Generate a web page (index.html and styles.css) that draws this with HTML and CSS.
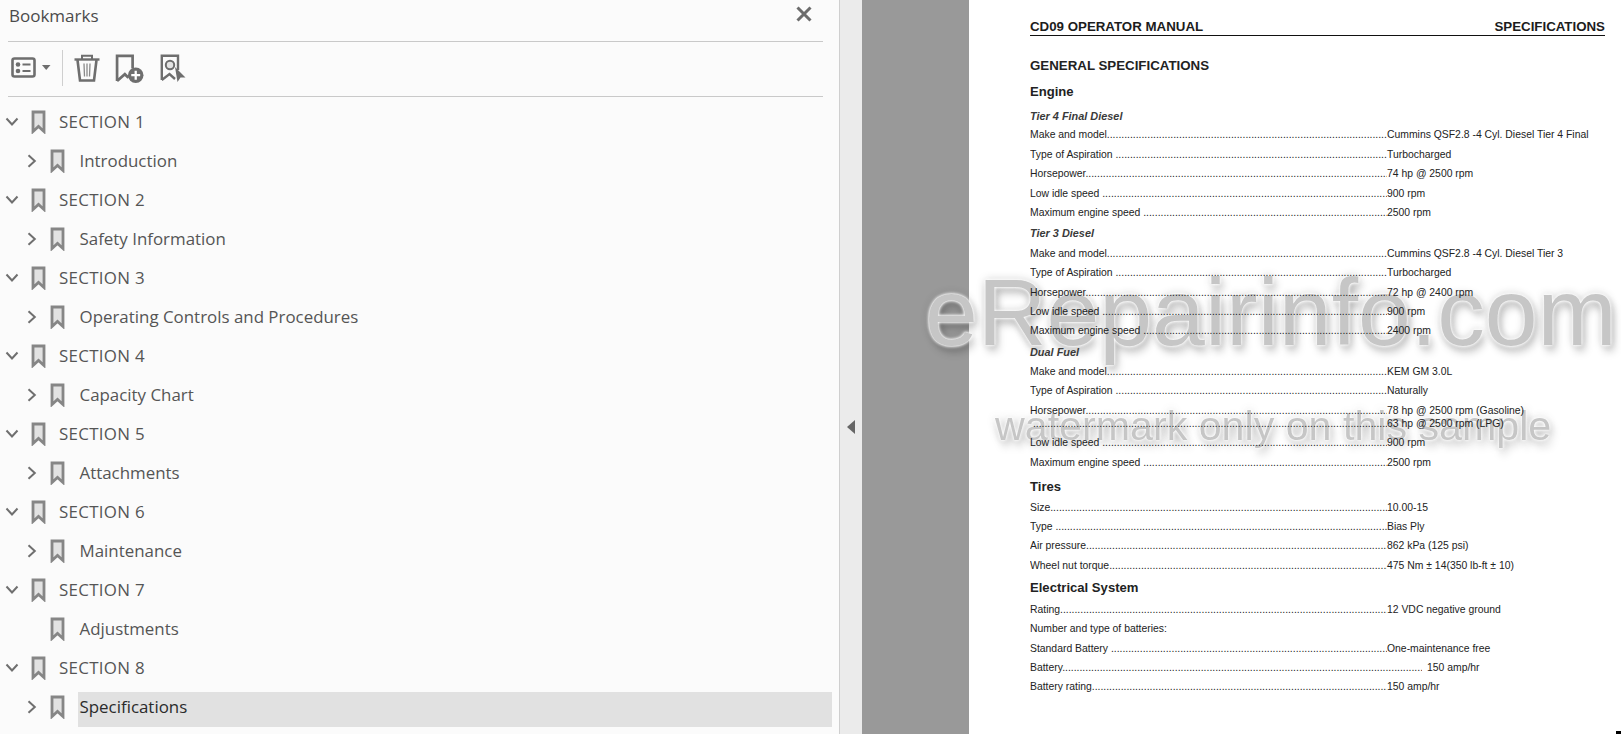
FILE: index.html
```html
<!DOCTYPE html>
<html lang="en">
<head>
<meta charset="utf-8">
<title>Bookmarks</title>
<link rel="stylesheet" href="styles.css">
</head>
<body>
<svg class="sprite" aria-hidden="true">
  <defs>
    <symbol id="bm" viewBox="0 0 15 24"><path d="M2 2 H13 V21.5 L7.5 16.5 L2 21.5 Z" fill="#e2e2e2" stroke="#868686" stroke-width="2.8" stroke-linejoin="miter"/></symbol>
    <symbol id="down" viewBox="0 0 14 10"><path d="M1.5 1.5 L7 7.5 L12.5 1.5" fill="none" stroke="#6f6f6f" stroke-width="2"/></symbol>
    <symbol id="right" viewBox="0 0 10 14"><path d="M1.5 1.2 L7.8 7 L1.5 12.8" fill="none" stroke="#6f6f6f" stroke-width="2"/></symbol>
  </defs>
</svg>
<aside class="sidebar">
  <header class="title-bar">
    <span class="title">Bookmarks</span>
    <svg class="close" viewBox="0 0 16 16"><path d="M1.5 1.5 L14.5 14.5 M14.5 1.5 L1.5 14.5" stroke="#6c6c6c" stroke-width="3" fill="none"/></svg>
  </header>
  <div class="toolbar">
    <svg class="tool-list" viewBox="0 0 40 21">
      <rect x="1.5" y="1.5" width="22" height="18" rx="2" fill="none" stroke="#6e6e6e" stroke-width="2.6"/>
      <circle cx="7" cy="7.5" r="2.3" fill="#6e6e6e"/><circle cx="7" cy="14" r="2.3" fill="#6e6e6e"/>
      <path d="M11.5 7.5 H19.5 M11.5 14 H19.5" stroke="#6e6e6e" stroke-width="2.2"/>
      <path d="M31 8 H39.5 L35.2 13 Z" fill="#6e6e6e"/>
    </svg>
    <span class="tool-sep"></span>
    <svg class="tool-trash" viewBox="0 0 26 28">
      <path d="M0.5 5.5 H25.5" stroke="#6e6e6e" stroke-width="2.4"/>
      <path d="M8 5 V1.8 H18 V5" fill="none" stroke="#6e6e6e" stroke-width="2"/>
      <path d="M3.5 6 L6 26.5 H20 L22.5 6" fill="none" stroke="#6e6e6e" stroke-width="2.6"/>
      <path d="M10 9.5 L10.5 22.5 M13 9.5 V22.5 M16 9.5 L15.5 22.5" stroke="#8a8a8a" stroke-width="1.3"/>
    </svg>
    <svg class="tool-add" viewBox="0 0 28 28">
      <path d="M2 26 V1.8 H17 V14 M2 26 L9.5 19.5 L13 23" fill="none" stroke="#6e6e6e" stroke-width="2.6"/>
      <circle cx="20" cy="20.5" r="7.5" fill="#6e6e6e"/>
      <path d="M20 16.2 V24.8 M15.7 20.5 H24.3" stroke="#fff" stroke-width="2.2"/>
    </svg>
    <svg class="tool-pick" viewBox="0 0 26 28">
      <path d="M1.8 26 V1.8 H18 V16 M1.8 26 L9.5 20 L15 25" fill="none" stroke="#6e6e6e" stroke-width="2.4"/>
      <circle cx="10" cy="11" r="4.2" fill="#e4e4e4" stroke="#6e6e6e" stroke-width="2"/>
      <path d="M15 13 L25.5 23.5 H20.5 L17.5 28 Z" fill="#6e6e6e"/>
    </svg>
  </div>
  <nav class="tree">
    <div class="node"><svg class="chev-d"><use href="#down"/></svg><svg class="bm"><use href="#bm"/></svg><span class="label">SECTION 1</span></div>
    <div class="node sub"><svg class="chev-r"><use href="#right"/></svg><svg class="bm"><use href="#bm"/></svg><span class="label">Introduction</span></div>
    <div class="node"><svg class="chev-d"><use href="#down"/></svg><svg class="bm"><use href="#bm"/></svg><span class="label">SECTION 2</span></div>
    <div class="node sub"><svg class="chev-r"><use href="#right"/></svg><svg class="bm"><use href="#bm"/></svg><span class="label">Safety Information</span></div>
    <div class="node"><svg class="chev-d"><use href="#down"/></svg><svg class="bm"><use href="#bm"/></svg><span class="label">SECTION 3</span></div>
    <div class="node sub"><svg class="chev-r"><use href="#right"/></svg><svg class="bm"><use href="#bm"/></svg><span class="label">Operating Controls and Procedures</span></div>
    <div class="node"><svg class="chev-d"><use href="#down"/></svg><svg class="bm"><use href="#bm"/></svg><span class="label">SECTION 4</span></div>
    <div class="node sub"><svg class="chev-r"><use href="#right"/></svg><svg class="bm"><use href="#bm"/></svg><span class="label">Capacity Chart</span></div>
    <div class="node"><svg class="chev-d"><use href="#down"/></svg><svg class="bm"><use href="#bm"/></svg><span class="label">SECTION 5</span></div>
    <div class="node sub"><svg class="chev-r"><use href="#right"/></svg><svg class="bm"><use href="#bm"/></svg><span class="label">Attachments</span></div>
    <div class="node"><svg class="chev-d"><use href="#down"/></svg><svg class="bm"><use href="#bm"/></svg><span class="label">SECTION 6</span></div>
    <div class="node sub"><svg class="chev-r"><use href="#right"/></svg><svg class="bm"><use href="#bm"/></svg><span class="label">Maintenance</span></div>
    <div class="node"><svg class="chev-d"><use href="#down"/></svg><svg class="bm"><use href="#bm"/></svg><span class="label">SECTION 7</span></div>
    <div class="node sub leaf"><svg class="bm"><use href="#bm"/></svg><span class="label">Adjustments</span></div>
    <div class="node"><svg class="chev-d"><use href="#down"/></svg><svg class="bm"><use href="#bm"/></svg><span class="label">SECTION 8</span></div>
    <div class="node sub active"><svg class="chev-r"><use href="#right"/></svg><svg class="bm"><use href="#bm"/></svg><span class="label">Specifications</span></div>
    <div class="node"><svg class="chev-d"><use href="#down"/></svg><svg class="bm"><use href="#bm"/></svg><span class="label">SECTION 9</span></div>
  </nav>
</aside>
<main class="viewer">
  <div class="gutter"><svg class="collapse" viewBox="0 0 8 14"><path d="M8 0 V14 L0 7 Z" fill="#666"/></svg></div>
  <div class="backdrop"></div>
  <section class="page">
    <div class="page-head"><span>CD09 OPERATOR MANUAL</span><span>SPECIFICATIONS</span></div>
    <h1 class="h-main">GENERAL SPECIFICATIONS</h1>
    <h2 class="h-engine">Engine</h2>
    <h3 class="tier">Tier 4 Final Diesel</h3>
    <div class="row"><span class="lead">Make and model</span><span>Cummins QSF2.8 -4 Cyl. Diesel Tier 4 Final</span></div>
    <div class="row"><span class="lead">Type of Aspiration </span><span>Turbocharged</span></div>
    <div class="row"><span class="lead">Horsepower</span><span>74 hp @ 2500 rpm</span></div>
    <div class="row"><span class="lead">Low idle speed </span><span>900 rpm</span></div>
    <div class="row"><span class="lead">Maximum engine speed </span><span>2500 rpm</span></div>
    <h3 class="tier">Tier 3 Diesel</h3>
    <div class="row"><span class="lead">Make and model</span><span>Cummins QSF2.8 -4 Cyl. Diesel Tier 3</span></div>
    <div class="row"><span class="lead">Type of Aspiration </span><span>Turbocharged</span></div>
    <div class="row"><span class="lead">Horsepower</span><span>72 hp @ 2400 rpm</span></div>
    <div class="row"><span class="lead">Low idle speed </span><span>900 rpm</span></div>
    <div class="row"><span class="lead">Maximum engine speed </span><span>2400 rpm</span></div>
    <h3 class="tier">Dual Fuel</h3>
    <div class="row"><span class="lead">Make and model</span><span>KEM GM 3.0L</span></div>
    <div class="row"><span class="lead">Type of Aspiration </span><span>Naturally</span></div>
    <div class="row tight"><span class="lead">Horsepower</span><span>78 hp @ 2500 rpm (Gasoline)</span></div>
    <div class="row"><span class="lead"> </span><span>63 hp @ 2500 rpm (LPG)</span></div>
    <div class="row"><span class="lead">Low idle speed </span><span>900 rpm</span></div>
    <div class="row"><span class="lead">Maximum engine speed </span><span>2500 rpm</span></div>
    <h2 class="h-tires">Tires</h2>
    <div class="row"><span class="lead">Size</span><span>10.00-15</span></div>
    <div class="row"><span class="lead">Type </span><span>Bias Ply</span></div>
    <div class="row"><span class="lead">Air pressure</span><span>862 kPa (125 psi)</span></div>
    <div class="row"><span class="lead">Wheel nut torque</span><span>475 Nm ± 14(350 lb-ft ± 10)</span></div>
    <h2 class="h-elec">Electrical System</h2>
    <div class="row"><span class="lead">Rating</span><span>12 VDC negative ground</span></div>
    <div class="row"><span>Number and type of batteries:</span></div>
    <div class="row"><span class="lead">Standard Battery </span><span>One-maintenance free</span></div>
    <div class="row long"><span class="lead">Battery</span><span>150 amp/hr</span></div>
    <div class="row"><span class="lead">Battery rating</span><span>150 amp/hr</span></div>
    <span class="corner"></span>
  </section>
  <div class="mark mark-big">eRepairinfo.com</div>
  <div class="mark mark-small">watermark only on this sample</div>
</main>
</body>
</html>
```
FILE: styles.css
```css
* { box-sizing: border-box; }
html, body { margin: 0; height: 734px; overflow: hidden; }
body { display: flex; background: #fff; font-family: "Open Sans", "Noto Sans", sans-serif; }
.sprite { position: absolute; width: 0; height: 0; }

/* Bookmarks panel */
.sidebar { width: 840px; height: 734px; flex: none; background: #fbfbfb; border-right: 1px solid #cfcfcf; overflow: hidden; }
.title-bar { height: 42px; margin: 0 16px 0 8px; border-bottom: 1px solid #c9c9c9; display: flex; justify-content: space-between; }
.title { font-size: 17px; line-height: 32px; color: #4b4b4b; padding-left: 1px; }
.close { width: 16px; height: 16px; margin: 6px 11px 0 0; }
.toolbar { height: 55px; margin: 0 16px 0 8px; border-bottom: 1px solid #c9c9c9; display: flex; align-items: flex-start; }
.tool-list { width: 40px; height: 21px; margin: 15px 0 0 3px; }
.tool-sep { width: 1px; height: 36px; margin: 8px 0 0 11px; background: #cfcfcf; }
.tool-trash { width: 26px; height: 28px; margin: 12px 0 0 11px; }
.tool-add { width: 29px; height: 29px; margin: 12px 0 0 15px; }
.tool-pick { width: 26px; height: 28px; margin: 12px 0 0 16px; }

/* Tree */
.tree { padding-top: 5px; }
.node { height: 39px; display: flex; align-items: center; padding-left: 5px; color: #555; font-size: 16.9px; }
.node .bm { width: 15px; height: 24px; flex: none; }
.chev-d { width: 14px; height: 10px; flex: none; margin-right: 12px; }
.chev-r { width: 10px; height: 14px; flex: none; margin: 0 13px 0 0; }
.label { margin-left: 13px; white-space: nowrap; letter-spacing: .3px; }
.sub { padding-left: 27px; }
.sub .label { margin-left: 14.5px; letter-spacing: 0; }
.sub.leaf { padding-left: 50px; }
.sub.active .label { align-self: flex-end; flex: 1; height: 35px; margin: 0 7px -1px 13px; padding: 0 0 6px 1.5px; line-height: 29px; background: #e1e1e1; color: #2b2b2b; }

/* Viewer */
.viewer { flex: 1; display: flex; position: relative; overflow: hidden; height: 734px; }
.viewer::before { content: ""; position: absolute; left: 129px; right: 0; top: 0; bottom: 0; background: #fff; }
.gutter { width: 22px; flex: none; background: #ebebeb; padding: 420px 0 0 7px; }
.collapse { display: block; width: 8px; height: 14px; }
.backdrop { width: 107px; flex: none; background: #999; }
.page { flex: 1; position: relative; z-index: 1; padding: 20px 16px 0 61px; font-family: "Liberation Sans", Arial, sans-serif; font-size: 10.4px; line-height: 14px; color: #222; }
.page-head { display: flex; justify-content: space-between; font-size: 13.3px; font-weight: 700; height: 16px; border-bottom: 1.5px solid #111; color: #1c1c1c; margin-bottom: 23px; line-height: 14px; }
.h-main, .h-engine, .h-tires, .h-elec { margin: 0; font-size: 13.1px; line-height: 14px; font-weight: 700; color: #222; }
.h-main { margin-bottom: 12px; font-size: 13.3px; }
.h-engine { margin-bottom: 10px; }
.h-tires { padding-top: 4.6px; margin-bottom: 7px; }
.h-elec { padding-top: 2.6px; margin-bottom: 8px; }
.tier { margin: 0 0 6.4px; font-size: 10.9px; line-height: 14px; font-style: italic; font-weight: 700; color: #3a3a3a; }
.h-engine + .tier { margin-bottom: 5.4px; }
.row + .tier { padding-top: 1px; }
.row { height: 14px; margin-bottom: 5.4px; display: flex; white-space: pre; }
.row.tight { margin-bottom: -1px; }
.lead { width: 357px; flex: none; overflow: hidden; display: block; }
.lead::after { content: "..............................................................................................................................................................."; }
.row.long .lead { width: 392px; margin-right: 5px; }
.corner { position: absolute; right: 0; bottom: 0; width: 5px; height: 3px; background: #000; }

/* Watermark */
.mark { position: absolute; font-family: "Liberation Sans", Arial, sans-serif; white-space: nowrap; color: rgba(120,120,120,.42); text-shadow: 0 0 1px #fff, 0 0 3px #fff, 0 0 4px #fff, 0 0 9px rgba(0,0,0,.25), 3px 6px 8px rgba(0,0,0,.25); line-height: 1; filter: blur(.6px); }
.mark-big { left: 85px; top: 265px; font-size: 95px; }
.mark-small { left: 155px; top: 406px; font-size: 41.2px; }
```
